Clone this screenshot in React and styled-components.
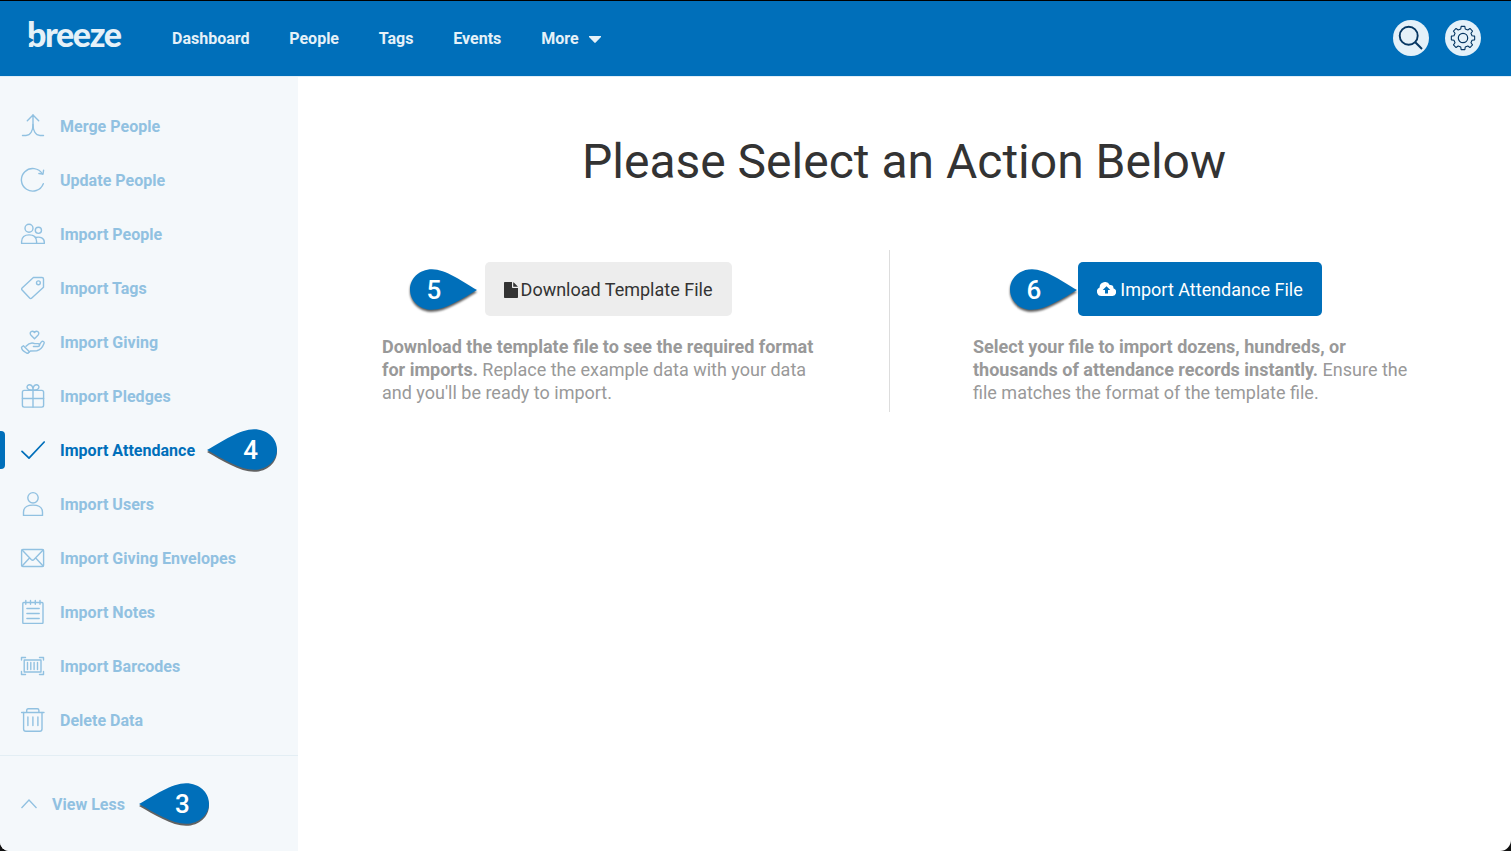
import React from 'react';
import styled, { createGlobalStyle } from 'styled-components';

const GlobalStyle = createGlobalStyle`
  * {
    box-sizing: border-box;
  }

  body {
    margin: 0;
    overflow: hidden;
    background: #111;
    font-family: Roboto, "Liberation Sans", sans-serif;
  }
`;

const navItems = ['Dashboard', 'People', 'Tags', 'Events'];

const icons = {
  merge: (
    <>
      <path d="M13 2v9.500c0 6-2.500 11-7 11H2.500" />
      <path d="M13 11.500c0 6 2.500 11 7 11h3.500" />
      <path d="M7.300 7.700L13 1.900l5.700 5.800" />
    </>
  ),
  update: (
    <>
      <path d="M23.300 16.700A11.300 11.300 0 1 1 22.400 7" />
      <path d="M23.600 3.200l-.6 3.900-4.100-.6" />
    </>
  ),
  people: (
    <>
      <circle cx="9" cy="7.300" r="4" />
      <circle cx="18.400" cy="9.300" r="3.100" />
      <path d="M1.600 22.400v-1.800c0-4.500 3-6.700 7.500-6.700s7.500 2.200 7.500 6.700v1.800z" />
      <path d="M15.500 16.500c5-1.200 8.800.9 8.800 4.800v1.100h-7.700" />
    </>
  ),
  tag: (
    <>
      <path d="M13.400 2.500H22a1.500 1.500 0 0 1 1.500 1.500v8.200L11.800 23.100a1.500 1.500 0 0 1-2.200 0l-7.500-8a1.500 1.500 0 0 1 0-2.200z" />
      <circle cx="18.400" cy="7.800" r="1.900" />
    </>
  ),
  giving: (
    <>
      <path d="M14.500 9.700L10.800 5.900C8.900 3.700 12 .7 14.500 3.500c2.500-2.800 5.600.2 3.700 2.400z" />
      <path d="M6 17.300c2.800-3.200 5.700-4 8.700-2.700h3.500c2 0 2 2.900 0 2.900h-4.800" />
      <path d="M19.200 15.900l2.200-3c1.200-1.300 3.400-.3 2.600 1.600-1.400 3.600-3.400 6.500-7.200 7.300l-6.400.2-2 1.600" />
      <path d="M1.500 18.300l1.900-1.500 6 6-1.900 1.900c-1.300-1.900-3.200-1.400-4.800-3.400-.8-1-1.200-2-1.200-3z" />
    </>
  ),
  gift: (
    <>
      <rect x="2.400" y="7.400" width="21.200" height="16.700" rx="1.800" />
      <path d="M2.400 15.500h21.200M13 7.400v16.700" />
      <path d="M13 7.200C4.900 7.200 6.400 1.500 9.700 1.700c2.400.2 3.300 2.300 3.300 5.500 0-3.200.9-5.300 3.300-5.500 3.300-.2 4.800 5.500-3.300 5.500z" />
    </>
  ),
  check: <path d="M2 14.300l7 6.900L24.200 5" strokeWidth="1.700" />,
  user: (
    <>
      <circle cx="13" cy="6.800" r="5.200" />
      <path d="M3.500 24.500v-3.200c0-5 4.100-7.200 9.500-7.200s9.500 2.200 9.500 7.200v3.200z" />
    </>
  ),
  envelope: (
    <>
      <rect x="1.600" y="4.500" width="22" height="17" rx="1.300" />
      <path d="M2.100 5l9.100 9.600c1 1 1.800 1 2.800 0L23.100 5M2.100 21l7.400-7.900M23.100 21l-7.400-7.900" />
    </>
  ),
  notes: (
    <>
      <rect x="2.800" y="3.500" width="20.200" height="21" rx="1" />
      <path d="M5.800 1.500v3.800M10.500 1.500v3.800M15.300 1.500v3.800M20 1.500v3.800" />
      <path d="M6.900 9.500h12.300M6.900 14.500h12.300M6.900 19.500h12.300" />
    </>
  ),
  barcode: (
    <>
      <path d="M1.500 7V4.500h4M19.500 4.500h4V7M23.500 18.500v3h-4M5.500 21.500h-4v-3" />
      <rect x="4.200" y="7" width="16.800" height="12" />
      <path d="M7.500 9.500v7M10.800 9.500v7M14.100 9.500v7M17.500 9.500v7" />
    </>
  ),
  trash: (
    <>
      <path d="M1.600 5.500H24M6.700 5.300V3.400c0-1 .5-1.600 1.500-1.600h9.200c1 0 1.500.6 1.500 1.600v1.900" />
      <path d="M3.600 5.500v16.600c0 1.300.7 2.200 2.200 2.200h14c1.500 0 2.200-.9 2.200-2.200V5.500" />
      <path d="M7.900 10v8.500M12.900 10v8.500M17.900 10v8.500" />
    </>
  ),
};

const menuItems = [
  { icon: 'merge', label: 'Merge People' },
  { icon: 'update', label: 'Update People' },
  { icon: 'people', label: 'Import People' },
  { icon: 'tag', label: 'Import Tags' },
  { icon: 'giving', label: 'Import Giving' },
  { icon: 'gift', label: 'Import Pledges' },
  { icon: 'check', label: 'Import Attendance', active: true, pin: 4 },
  { icon: 'user', label: 'Import Users' },
  { icon: 'envelope', label: 'Import Giving Envelopes' },
  { icon: 'notes', label: 'Import Notes' },
  { icon: 'barcode', label: 'Import Barcodes' },
  { icon: 'trash', label: 'Delete Data' },
];

// Builds the outline of the settings cog
const gearPath = () => {
  const points = [];
  for (let i = 0; i < 8; i += 1) {
    [[-14, 9.3], [-9, 11.8], [9, 11.8], [14, 9.3]].forEach(([offset, r]) => {
      const a = ((i * 45 + offset) * Math.PI) / 180;
      points.push(`${(13 + r * Math.sin(a)).toFixed(2)} ${(13 - r * Math.cos(a)).toFixed(2)}`);
    });
  }
  return `M${points.join('L')}Z`;
};

const Pin = ({ number, pointsRight }) => (
  <PinWrapper $pointsRight={pointsRight}>
    <PinShape viewBox="0 0 70 44" preserveAspectRatio="none" $pointsRight={pointsRight}>
      <path d="M0 21C15 12.500 33 .2 47 .2C60.500 .2 70 9.500 70 20.500S60.500 40.800 47 40.800C33 40.800 15 29.500 0 21z" />
    </PinShape>
    <PinNumber $pointsRight={pointsRight}>{number}</PinNumber>
  </PinWrapper>
);

const App = () => {
  return (
    <Page>
      <GlobalStyle />
      <Header>
        <Logo>breeze</Logo>
        <Nav>
          {navItems.map((item) => (
            <NavLink key={item}>{item}</NavLink>
          ))}
          <NavLink>
            More
            <Caret viewBox="0 0 12 7">
              <path d="M0 0h12v1L6.700 6.600Q6 7.200 5.300 6.600L0 1z" />
            </Caret>
          </NavLink>
        </Nav>
        <HeaderActions>
          <RoundButton aria-label="Search">
            <svg width="26" height="26" viewBox="0 0 26 26">
              <circle cx="10.700" cy="10.700" r="9" strokeWidth="1.900" />
              <path d="M17.300 17.300l6.700 6.700" strokeWidth="2" />
            </svg>
          </RoundButton>
          <RoundButton aria-label="Settings">
            <svg width="26" height="26" viewBox="0 0 26 26">
              <path d={gearPath()} strokeWidth="1.100" strokeLinejoin="round" />
              <circle cx="13" cy="13" r="4.700" strokeWidth="1.200" />
            </svg>
          </RoundButton>
        </HeaderActions>
      </Header>
      <Body>
        <Sidebar>
          <Menu>
            {menuItems.map((item) => (
              <MenuItem key={item.label} $active={item.active}>
                <MenuIcon viewBox="0 0 25 25">{icons[item.icon]}</MenuIcon>
                <MenuLabel>{item.label}</MenuLabel>
                {item.pin && <Pin number={item.pin} />}
              </MenuItem>
            ))}
          </Menu>
          <ViewLess>
            <Chevron viewBox="0 0 16 10">
              <path d="M.5 9L8 1l7.500 8" />
            </Chevron>
            <MenuLabel $gap={2}>View Less</MenuLabel>
            <Pin number={3} />
          </ViewLess>
        </Sidebar>
        <Main>
          <Title>Please Select an Action Below</Title>
          <Actions>
            <Action>
              <ButtonRow>
                <PinHolder $right={255}>
                  <Pin number={5} pointsRight />
                </PinHolder>
                <ActionButton>
                  <FileIcon viewBox="0 0 14 16">
                    <path d="M0 .8Q0 0 .8 0H8v5.200q0 .8.800.8H14v9.200q0 .8-.800.8H.8q-.8 0-.8-.8zM9.200.2q.3.100.6.400l3.500 3.400q.3.300.5.700H9.200z" />
                  </FileIcon>
                  Download Template File
                </ActionButton>
              </ButtonRow>
              <Description>
                <b>Download the template file to see the required format<br />for imports.</b> Replace the example data with your data<br />and you'll be ready to import.
              </Description>
            </Action>
            <Divider />
            <Action $last>
              <ButtonRow>
                <PinHolder $right={238}>
                  <Pin number={6} pointsRight />
                </PinHolder>
                <ActionButton $primary>
                  <CloudIcon viewBox="0 0 19 14">
                    <path
                      fillRule="evenodd"
                      d="M4.500 14A4.500 4.500 0 0 1 2.600 5.400 5.300 5.300 0 0 1 12.700 3.100 2.800 2.800 0 0 1 16.400 6.200 4 4 0 0 1 15.500 14zM8 11.500h3V8h2.300L9.500 4.200 5.700 8H8z"
                    />
                  </CloudIcon>
                  Import Attendance File
                </ActionButton>
              </ButtonRow>
              <Description>
                <b>Select your file to import dozens, hundreds, or<br />thousands of attendance records instantly.</b> Ensure the<br />file matches the format of the template file.
              </Description>
            </Action>
          </Actions>
        </Main>
      </Body>
    </Page>
  );
};

const Page = styled.div`
  display: flex;
  flex-direction: column;
  width: 1511px;
  height: 851px;
  overflow: hidden;
  border-top: 1px solid #000;
  border-radius: 0 0 11px 9px;
  background: #fff;
`;

const Header = styled.header`
  display: flex;
  align-items: center;
  flex: none;
  height: 76px;
  padding: 0 30px 0 28px;
  background: #006fba;
  border-bottom: 1px solid #e1eef7;
  color: #e5f1f8;
`;

const Logo = styled.div`
  position: relative;
  width: 144px;
  height: 44px;
  margin-top: -10px;
  font: 900 34px/44px Lato, sans-serif;
  letter-spacing: -1.4px;
  text-indent: -1px;

  /* the notch that opens the stem of the first letter */
  &::after {
    content: '';
    position: absolute;
    top: 25px;
    left: 0;
    border-style: solid;
    border-width: 3px 0 4px 6px;
    border-color: transparent transparent transparent #006fba;
  }
`;

const Nav = styled.nav`
  display: flex;
  gap: 39.8px;
`;

const NavLink = styled.a`
  display: flex;
  align-items: center;
  font-size: 16px;
  font-weight: 700;
  line-height: 20px;
`;

const Caret = styled.svg`
  width: 12px;
  height: 7px;
  margin: 1px 0 0 10px;
  fill: currentColor;
`;

const HeaderActions = styled.div`
  display: flex;
  gap: 16px;
  margin: -2px 0 0 auto;
`;

const RoundButton = styled.button`
  display: flex;
  align-items: center;
  justify-content: center;
  width: 36px;
  height: 36px;
  padding: 0;
  border: 0;
  border-radius: 50%;
  background: #e4f1f9;

  svg {
    fill: none;
    stroke: #063763;
  }
`;

const Body = styled.div`
  display: flex;
  flex: 1;
`;

const Sidebar = styled.aside`
  width: 298px;
  background: #f4f8fb;
  color: #91c1e1;
`;

const Menu = styled.div`
  padding: 22px 0 8px;
  border-bottom: 1px solid #e3eef4;
`;

const MenuItem = styled.div`
  display: flex;
  align-items: center;
  height: 54px;
  padding-left: ${(props) => (props.$active ? '15px' : '20px')};
  color: ${(props) => (props.$active ? '#006fba' : 'inherit')};

  &::before {
    content: '';
    display: ${(props) => (props.$active ? 'block' : 'none')};
    width: 5px;
    height: 38px;
    margin-left: -15px;
    margin-right: 15px;
    border-radius: 0 4px 4px 0;
    background: #006fba;
  }
`;

const MenuIcon = styled.svg`
  flex: none;
  width: 25px;
  height: 25px;
  margin: 0 15px 1px 0;
  fill: none;
  stroke: currentColor;
  stroke-width: 1.4;
  stroke-linecap: round;
  stroke-linejoin: round;
`;

const MenuLabel = styled.span`
  margin: 2px ${(props) => props.$gap || 0}px 0 0;
  font-size: 16px;
  font-weight: 700;
  line-height: 20px;
  letter-spacing: 0.02px;
  white-space: nowrap;
`;

const ViewLess = styled.div`
  display: flex;
  align-items: center;
  height: 96px;
  padding-left: 21px;
`;

const Chevron = styled.svg`
  width: 16px;
  height: 10px;
  margin-right: 15px;
  fill: none;
  stroke: currentColor;
  stroke-width: 1.3;
`;

const PinWrapper = styled.div`
  position: relative;
  flex: none;
  width: ${(props) => (props.$pointsRight ? '67px' : '70px')};
  height: 44px;
  margin: ${(props) => (props.$pointsRight ? '0' : '2px 0 0 12px')};
`;

const PinShape = styled.svg`
  display: block;
  width: 100%;
  height: 44px;
  overflow: visible;
  fill: #006fba;
  transform: ${(props) => (props.$pointsRight ? 'scaleX(-1)' : 'none')};
  filter: ${(props) =>
    props.$pointsRight
      ? 'drop-shadow(0 2px 1px rgba(0, 0, 0, 0.65))'
      : 'drop-shadow(0 2px 0.3px rgba(60, 60, 60, 0.8))'};
`;

const PinNumber = styled.span`
  position: absolute;
  top: 6px;
  left: ${(props) => (props.$pointsRight ? '8px' : '27.5px')};
  width: 32px;
  color: #fff;
  font-size: 26px;
  font-weight: 500;
  line-height: 30px;
  text-align: center;
`;

const Main = styled.main`
  flex: 1;
  padding-top: 50px;
  color: #333;
`;

const Title = styled.h1`
  margin: 0 1px 0 0;
  font-size: 48px;
  font-weight: 400;
  line-height: 70px;
  text-align: center;
  white-space: nowrap;
`;

const Actions = styled.div`
  display: flex;
  height: 162px;
  margin-top: 53px;
  padding-left: 84px;
`;

const Action = styled.section`
  width: ${(props) => (props.$last ? '454px' : '453px')};
  margin-left: ${(props) => (props.$last ? '83px' : '0')};
  padding-top: 12px;
`;

const Divider = styled.div`
  width: 1px;
  margin-left: 54px;
  background: #ddd;
`;

const ButtonRow = styled.div`
  position: relative;
  display: flex;
  justify-content: center;
`;

const PinHolder = styled.div`
  position: absolute;
  top: 7px;
  right: calc(50% + ${(props) => props.$right / 2 + 4}px);
`;

const ActionButton = styled.button`
  display: flex;
  align-items: center;
  justify-content: center;
  width: ${(props) => (props.$primary ? '244px' : '247px')};
  height: 54px;
  padding: ${(props) => (props.$primary ? '0' : '0 1px 0 0')};
  border: 0;
  border-radius: 5px;
  background: ${(props) => (props.$primary ? '#006fba' : '#ededed')};
  color: ${(props) => (props.$primary ? '#fff' : '#333')};
  font-family: inherit;
  font-size: 18px;
  white-space: nowrap;
`;

const FileIcon = styled.svg`
  width: 14px;
  height: 16px;
  margin: 2px 3px 0 0;
  fill: currentColor;
`;

const CloudIcon = styled.svg`
  width: 19px;
  height: 14px;
  margin-right: 4px;
  fill: currentColor;
`;

const Description = styled.p`
  margin: 19px 0 0;
  color: #999;
  font-size: 18px;
  line-height: 23px;
  white-space: nowrap;
`;

export default App;
